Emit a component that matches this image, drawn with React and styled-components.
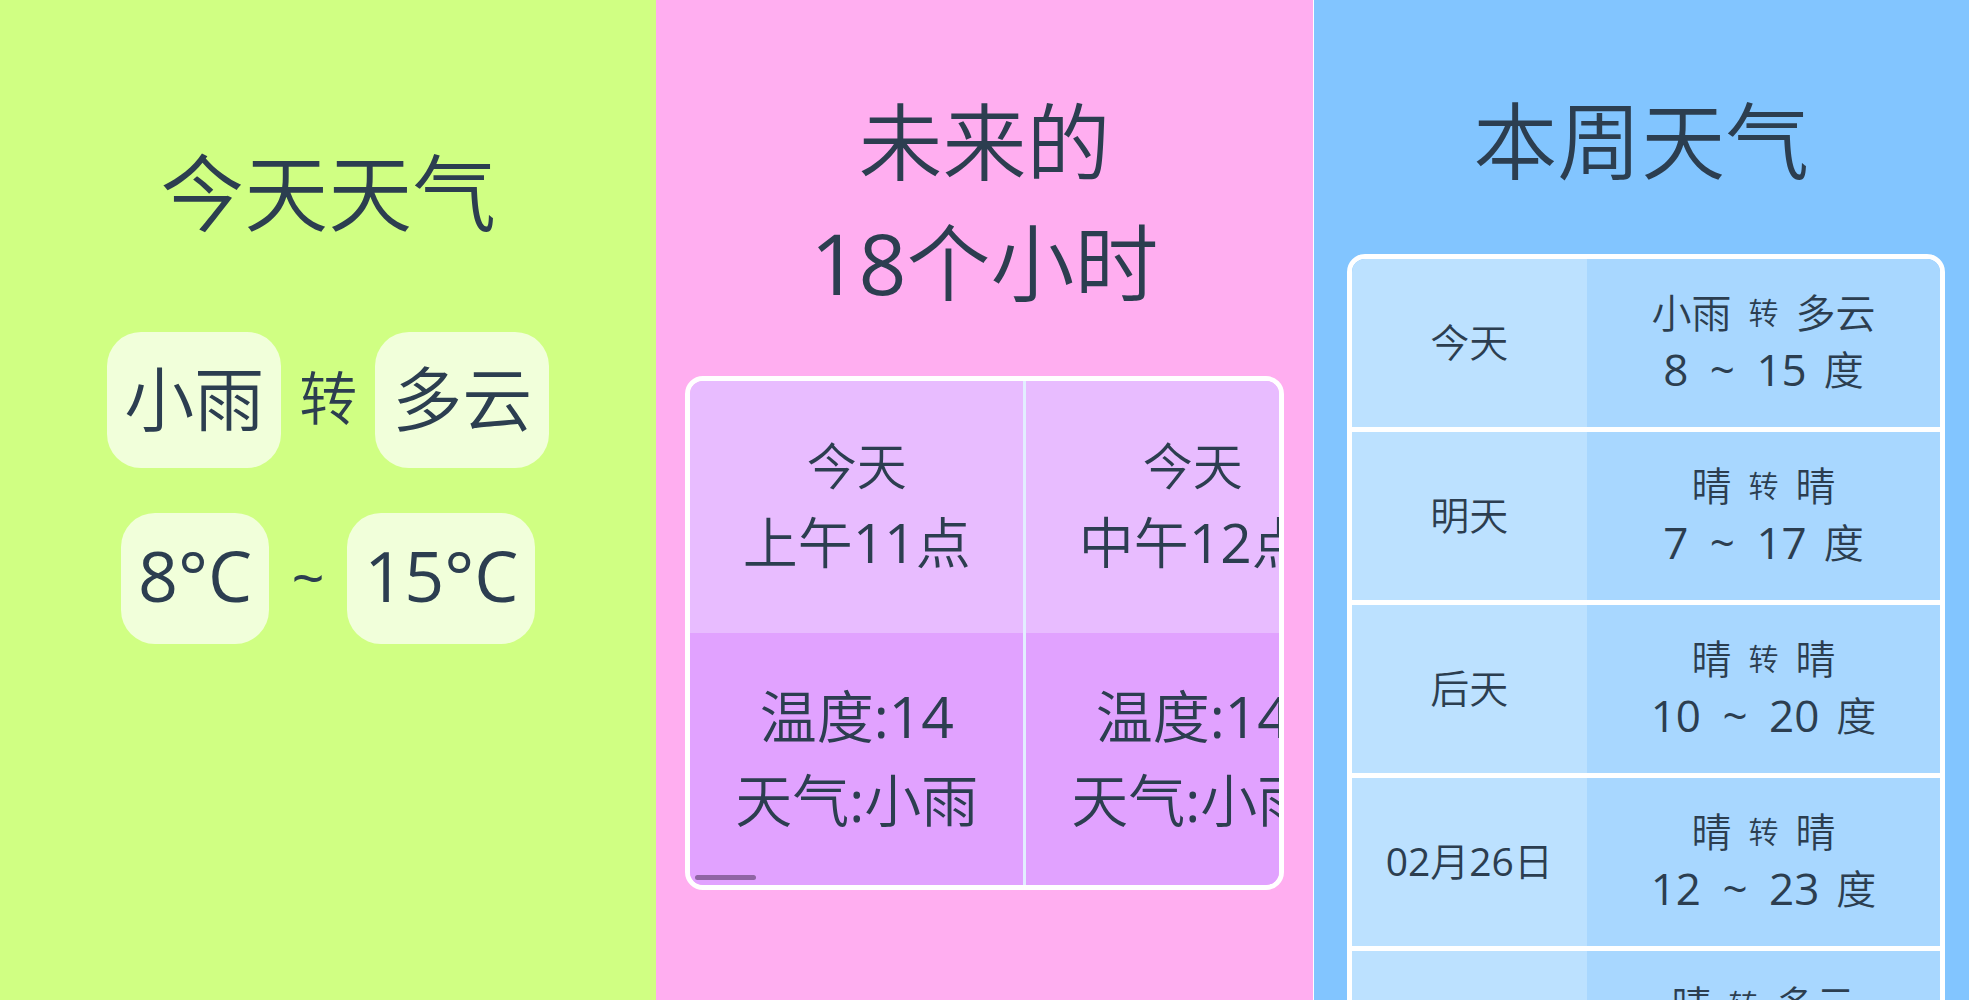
import React from "react";
import styled, { createGlobalStyle } from "styled-components";

const GlobalStyle = createGlobalStyle`
  *, *::before, *::after { box-sizing: border-box; }
  body {
    margin: 0;
    color: #2c3e50;
    font-family: "Open Sans", "Noto Sans CJK SC", sans-serif;
    font-weight: 350;
  }
`;

const Screens = styled.div`
  display: grid;
  grid-template-columns: repeat(3, minmax(0, 1fr));
  height: 100vh;
`;

const Panel = styled.section`
  height: 100vh;
  padding-top: ${(p) => p.$top}px;
  overflow-x: hidden;
  overflow-y: auto;
  scrollbar-width: none;
  background: ${(p) => p.$color};
  border-left: ${(p) => (p.$edge ? `1px solid ${p.$edge}` : "none")};
`;

const Title = styled.h1`
  margin: 0;
  font-size: 84px;
  line-height: 121px;
  font-weight: inherit;
  text-align: center;
`;

const Num = styled.span`
  font-weight: 400;
`;

const PillRow = styled.div`
  display: flex;
  justify-content: center;
  align-items: center;
  gap: 18px;
  margin-top: ${(p) => p.$gap}px;
`;

const Pill = styled.span`
  padding: ${(p) => (p.$numeric ? "15px 17px 21px" : "17px 17px 19px")};
  border-radius: 34px;
  background: rgba(255, 255, 255, 0.7);
  font-size: 70px;
  font-weight: ${(p) => (p.$numeric ? 400 : 350)};
  line-height: ${(p) => (p.$numeric ? 95 : 100)}px;
  white-space: nowrap;
`;

const Joiner = styled.span`
  min-width: 42px;
  padding-bottom: 4px;
  font-size: 58px;
  font-weight: ${(p) => (p.$numeric ? 400 : 350)};
  line-height: 84px;
  text-align: center;
`;

const HourCard = styled.div`
  position: relative;
  margin: 53px 29px 0;
  border: 5px solid #fff;
  border-radius: 18px;
  overflow: hidden;
`;

const HourScroller = styled.div`
  overflow-x: auto;
  scrollbar-width: none;
`;

const HourTable = styled.table`
  width: 672px;
  table-layout: fixed;
  border-collapse: separate;
  border-spacing: 0;
`;

const HourCell = styled.td`
  height: 252px;
  padding: 0 0 2px;
  border-right: 3px solid #e2eeff;
  background: ${(p) => (p.$head ? "#e8bcff" : "#e1a2ff")};
  font-weight: inherit;
  text-align: center;
  vertical-align: middle;
`;

const HourLine = styled.div`
  font-size: ${(p) => p.$size}px;
  line-height: ${(p) => p.$line}px;
  white-space: nowrap;
`;

const ScrollThumb = styled.span`
  position: absolute;
  left: 5px;
  bottom: 5px;
  width: 61px;
  height: 5px;
  border-radius: 3px;
  background: #8f65a4;
`;

const WeekCard = styled.div`
  margin: 53px 24px 0 33px;
  border: 5px solid #fff;
  border-radius: 18px;
  overflow: hidden;
`;

const WeekTable = styled.table`
  width: 100%;
  table-layout: fixed;
  border-collapse: separate;
  border-spacing: 0;

  tr + tr > * { border-top: 5px solid #fff; }
`;

const DayName = styled.th`
  width: 40%;
  padding: 0 0 4px;
  background: #bce1ff;
  font-size: 39px;
  line-height: 57px;
  font-weight: inherit;
  text-align: center;
`;

const DayInfo = styled.td`
  padding: 25px 0 29px;
  background: #a8d7ff;
`;

const DayLine = styled.div`
  display: flex;
  justify-content: center;
  align-items: center;
  gap: 17px;
  height: 57px;
  font-size: 40px;
  line-height: 57px;
`;

const Change = styled.span`
  font-size: 30px;
`;

const Degree = styled(Num)`
  font-size: 44px;
`;

const Tilde = styled(Degree)`
  width: 34px;
  text-align: center;
`;

const hours = [
  { day: "今天", time: "上午11点", temp: 14, sky: "小雨" },
  { day: "今天", time: "中午12点", temp: 14, sky: "小雨" },
];

const week = [
  { day: "今天", from: "小雨", to: "多云", low: 8, high: 15 },
  { day: "明天", from: "晴", to: "晴", low: 7, high: 17 },
  { day: "后天", from: "晴", to: "晴", low: 10, high: 20 },
  { day: "02月26日", from: "晴", to: "晴", low: 12, high: 23 },
  { day: "02月27日", from: "晴", to: "多云" },
];

// Digits carry a slightly stronger weight than the characters around them.
function Mixed({ text }) {
  return text
    .split(/(\d+)/)
    .map((part, i) => (i % 2 ? <Num key={i}>{part}</Num> : part));
}

function Today() {
  return (
    <Panel $color="#d0ff83" $top={132}>
      <Title>今天天气</Title>
      <PillRow $gap={79}>
        <Pill>小雨</Pill>
        <Joiner>转</Joiner>
        <Pill>多云</Pill>
      </PillRow>
      <PillRow $gap={45}>
        <Pill $numeric>8°C</Pill>
        <Joiner $numeric>~</Joiner>
        <Pill $numeric>15°C</Pill>
      </PillRow>
    </Panel>
  );
}

function Hourly() {
  return (
    <Panel $color="#ffaef0" $top={81}>
      <Title>
        未来的
        <br />
        <Mixed text="18个小时" />
      </Title>
      <HourCard>
        <HourScroller>
          <HourTable>
            <thead>
              <tr>
                {hours.map((h) => (
                  <HourCell as="th" scope="col" $head key={h.time}>
                    <HourLine $size={50} $line={72}>{h.day}</HourLine>
                    <HourLine $size={55} $line={80}>
                      <Mixed text={h.time} />
                    </HourLine>
                  </HourCell>
                ))}
              </tr>
            </thead>
            <tbody>
              <tr>
                {hours.map((h) => (
                  <HourCell key={h.time}>
                    <HourLine $size={57} $line={84}>
                      温度<Num>:{h.temp}</Num>
                    </HourLine>
                    <HourLine $size={57} $line={84}>
                      天气<Num>:</Num>{h.sky}
                    </HourLine>
                  </HourCell>
                ))}
              </tr>
            </tbody>
          </HourTable>
        </HourScroller>
        <ScrollThumb />
      </HourCard>
    </Panel>
  );
}

function Week() {
  return (
    <Panel $color="#82c5ff" $edge="#fff" $top={80}>
      <Title>本周天气</Title>
      <WeekCard>
        <WeekTable>
          <tbody>
            {week.map((d) => (
              <tr key={d.day}>
                <DayName scope="row">
                  <Mixed text={d.day} />
                </DayName>
                <DayInfo>
                  <DayLine>
                    <span>{d.from}</span>
                    <Change>转</Change>
                    <span>{d.to}</span>
                  </DayLine>
                  <DayLine>
                    {d.low !== undefined && (
                      <>
                        <Degree>{d.low}</Degree>
                        <Tilde>~</Tilde>
                        <Degree>{d.high}</Degree>
                        <span>度</span>
                      </>
                    )}
                  </DayLine>
                </DayInfo>
              </tr>
            ))}
          </tbody>
        </WeekTable>
      </WeekCard>
    </Panel>
  );
}

export default function App() {
  return (
    <>
      <GlobalStyle />
      <Screens lang="zh-CN">
        <Today />
        <Hourly />
        <Week />
      </Screens>
    </>
  );
}
